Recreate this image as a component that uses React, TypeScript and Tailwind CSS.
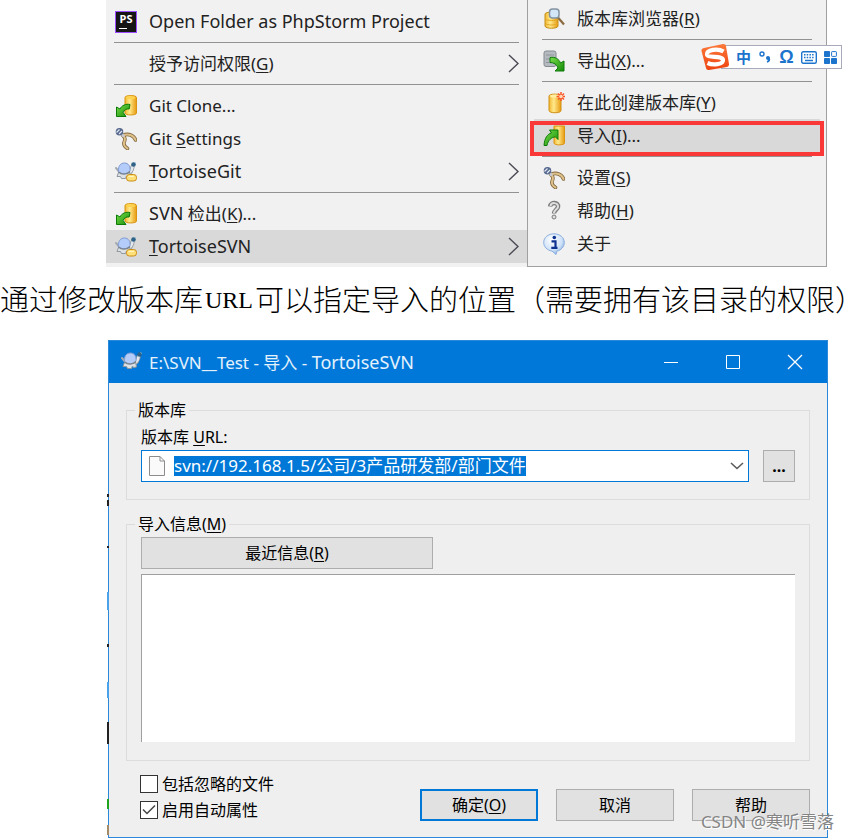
import type { ReactNode } from "react";

const UI_FONT = "font-['Noto_Sans','Noto_Sans_CJK_SC',sans-serif]";

function PhpStormIcon() {
  return (
    <div className="w-[22px] h-[22px] border border-[#9b4dff] bg-[#151515] text-white text-[11px] leading-[14px] font-bold text-center relative">
      PS
      <span className="absolute left-[3px] bottom-[3px] w-2 h-px bg-white" />
    </div>
  );
}

function Gradients() {
  return (
    <svg width="0" height="0" className="absolute" aria-hidden="true">
      <defs>
        <linearGradient id="gold" x1="0" x2="1" y1="0" y2="0">
          <stop offset="0" stopColor="#f2b632" />
          <stop offset="0.4" stopColor="#ffe98a" />
          <stop offset="1" stopColor="#e79a10" />
        </linearGradient>
        <linearGradient id="green" x1="0" x2="1" y1="0" y2="1">
          <stop offset="0" stopColor="#7ae04a" />
          <stop offset="1" stopColor="#128a08" />
        </linearGradient>
        <linearGradient id="orange" x1="0" x2="0" y1="0" y2="1">
          <stop offset="0" stopColor="#fb7a3a" />
          <stop offset="1" stopColor="#ee4310" />
        </linearGradient>
        <radialGradient id="bubble" cx="0.4" cy="0.3" r="0.8">
          <stop offset="0" stopColor="#ffffff" />
          <stop offset="0.6" stopColor="#cfe2f8" />
          <stop offset="1" stopColor="#6e9fdc" />
        </radialGradient>
      </defs>
    </svg>
  );
}

function Svg({ children }: { children: ReactNode }) {
  return (
    <svg width="22" height="22" viewBox="0 0 22 22" fill="none" aria-hidden="true">
      {children}
    </svg>
  );
}

function CheckoutIcon() {
  return (
    <Svg>
      <path d="M10 2.500c0-2.600 11.500-2.600 11.500 0v15.500c0 2.600-11.500 2.600-11.500 0z" fill="url(#gold)" stroke="#d99410" />
      <ellipse cx="15.700" cy="2.700" rx="4.800" ry="1.400" fill="#ffd34d" />
      <path d="M15 9.500C11 8.500 6.500 10.500 5 14L1.500 12v9.500H11L8.200 17.500c.8-2.500 3.300-4 6-3.500z" fill="url(#green)" stroke="#0d7a08" />
    </Svg>
  );
}

function ImportIcon() {
  return (
    <Svg>
      <path d="M11 1h10.500v17c0 2.500-10.500 2.500-10.500 0z" fill="url(#gold)" stroke="#d99410" />
      <path d="M1 20.500C1.500 13 4.500 9 8.500 8L6.500 5H15v9.500l-2.700-2.700C8.500 12.500 5 15 4 20.500z" fill="url(#green)" stroke="#0d7a08" />
    </Svg>
  );
}

function WrenchIcon() {
  return (
    <Svg>
      <path d="M8 7.500c2.500 2 2 5 1 7-.5 2.500 1 4.500 3.500 6" stroke="#80683e" strokeWidth="3.600" strokeLinecap="round" />
      <path d="M8 7.500c5-2.500 11-.5 12.500 4.500" stroke="#80683e" strokeWidth="3.600" strokeLinecap="round" />
      <path d="M8 7.500c2.500 2 2 5 1 7-.5 2.500 1 4.500 3.500 6" stroke="#dfc08a" strokeWidth="2" strokeLinecap="round" />
      <path d="M8 7.500c5-2.500 11-.5 12.500 4.500" stroke="#dfc08a" strokeWidth="2" strokeLinecap="round" />
      <circle cx="4.500" cy="3.800" r="3.800" fill="#56678c" />
      <path d="M1.500 4.500l3-3M4 6l3-3" stroke="#dfe6f2" strokeWidth="1.200" />
      <circle cx="8" cy="7.500" r="1.600" fill="#c2c8d4" />
    </Svg>
  );
}

function TortoiseIcon({ badge = true }: { badge?: boolean }) {
  return (
    <Svg>
      <path d="M13 12.500c3-1 4-4 4.500-6.500" stroke="#8f979f" strokeWidth="4.200" strokeLinecap="round" />
      <path d="M13 12.500c3-1 4-4 4.500-6.500" stroke="#e3e8ec" strokeWidth="2.600" strokeLinecap="round" />
      <path d="M1 7l2.500 3" stroke="#a5abb2" strokeWidth="2" strokeLinecap="round" />
      <path d="M3.500 11.500L2 15.500h3.500l1 2h4l1-2.500 1 1.500 3-.5-1-5z" fill="#dde2e6" stroke="#8f979f" />
      <path d="M3.500 10.500C3 5 5.500 2 9.500 2s6 3.500 5.500 8c-3 3.500-8.500 3.500-11.500.5z" fill="#b3ccfa" stroke="#7f9bd2" />
      <path d="M3.500 11c3 3 8.500 3 11.500-.5" stroke="#7a828c" strokeWidth="1.300" />
      <circle cx="18.500" cy="3.500" r="2.300" fill="#2f6488" />
      <path d="M19.500 1.500l1.500 1" stroke="#7fb0cc" />
      {badge && <rect x="11.500" y="13.500" width="10" height="6.500" rx="2.800" fill="#ffdf78" stroke="#c98d18" />}
      {badge && <path d="M13.500 15.500h5.500" stroke="#fff4c2" />}
    </Svg>
  );
}

function BrowserIcon() {
  return (
    <Svg>
      <path d="M2 6c0-2.500 13-2.500 13 0v12c0 3-13 3-13 0z" fill="url(#gold)" stroke="#c58f16" />
      <path d="M2 11c3 2 10 2 13 0M2 15.500c3 2 10 2 13 0" stroke="#e2a821" />
      <path d="M15 9.500l6 7" stroke="#8b6a3f" strokeWidth="2.200" />
      <rect x="6.500" y="1" width="9.500" height="9" rx="3" fill="#d3e6f8" stroke="#8392a1" strokeWidth="1.500" />
    </Svg>
  );
}

function ExportIcon() {
  return (
    <Svg>
      <rect x="1" y="1" width="12" height="15.500" rx="2" fill="#b4bac0" stroke="#858b90" />
      <path d="M3 5h8M3 9h8M3 12.500h5" stroke="#8f969c" />
      <path d="M7 7.500c5-1 9 1.500 10.500 5.500l3.500-2v10H12l3-3c-1-3.500-4-5.500-8-5.500z" fill="url(#green)" stroke="#0d7a08" />
    </Svg>
  );
}

function CreateRepoIcon() {
  return (
    <Svg>
      <path d="M6 4c0-2.500 12-2.500 12 0v14.500c0 3-12 3-12 0z" fill="url(#gold)" stroke="#d09015" />
      <ellipse cx="12" cy="4" rx="5" ry="1.500" fill="#fff0a4" />
      <path d="M18 0v9M13.500 4.500h9M15 1.500l6 6M21 1.500l-6 6" stroke="#fa5528" strokeWidth="1.500" />
      <circle cx="18" cy="4.500" r="1.800" fill="#ffd9b8" />
    </Svg>
  );
}

function HelpIcon() {
  return (
    <Svg>
      <path d="M7 6.500C7.500 1.500 16 2 15 7c-.5 2.500-4 3-4 6.500" stroke="#7c7c7c" strokeWidth="4.400" />
      <path d="M7.500 6C8 2 15.500 2 15 7c-.5 2.500-4 3-4 6" stroke="#dedede" strokeWidth="2" />
      <circle cx="11" cy="17" r="2" fill="#dedede" stroke="#7c7c7c" />
    </Svg>
  );
}

function AboutIcon() {
  return (
    <Svg>
      <path d="M11 .8c5.800 0 10.300 3.700 10.300 8.700 0 4.300-3.300 7.800-7.300 8.600L13 21.500l-4-3.400C4.200 17.300.7 13.800.7 9.500.7 4.500 5.200.8 11 .8z" fill="url(#bubble)" stroke="#8caede" />
      <circle cx="11.300" cy="4.500" r="1.800" fill="#0e3291" />
      <path d="M8.500 8.300h4v6M8.300 14.800h6.200" stroke="#0e3291" strokeWidth="2.200" />
    </Svg>
  );
}

function Arrow() {
  return (
    <svg width="11" height="19" viewBox="0 0 11 19" fill="none" stroke="#4a4a55" strokeWidth="1.400" aria-hidden="true">
      <path d="M1 1l9 8.500L1 18" />
    </svg>
  );
}

function Key({ children }: { children: string }) {
  return <span className="underline underline-offset-2 decoration-1">{children}</span>;
}

type MenuItemProps = {
  icon?: ReactNode;
  children: ReactNode;
  submenu?: boolean;
  active?: boolean;
};

function MenuItem({ icon, children, submenu, active }: MenuItemProps) {
  return (
    <button
      type="button"
      className={`flex w-full h-[33px] items-center gap-3 pl-[9px] pr-2 text-left whitespace-nowrap ${active ? "bg-[#d9d9d9]" : ""}`}
    >
      <span className="w-[22px] h-[22px] shrink-0">{icon}</span>
      <span className="flex-1">{children}</span>
      {submenu && <Arrow />}
    </button>
  );
}

function Separator() {
  return <div className="h-[9px] mx-2 flex items-center"><div className="h-px w-full bg-[#929292]" /></div>;
}

function ExplorerMenu() {
  return (
    <nav className="flex-1 bg-[#f1f1f1] pt-[5px] pb-1" aria-label="Explorer">
      <MenuItem icon={<PhpStormIcon />}><span className="text-[18px]">Open Folder as PhpStorm Project</span></MenuItem>
      <Separator />
      <MenuItem submenu>授予访问权限(<Key>G</Key>)</MenuItem>
      <Separator />
      <MenuItem icon={<CheckoutIcon />}>Git Clone...</MenuItem>
      <MenuItem icon={<WrenchIcon />}>Git <Key>S</Key>ettings</MenuItem>
      <MenuItem icon={<TortoiseIcon />} submenu><span className="text-[18px]"><Key>T</Key>ortoiseGit</span></MenuItem>
      <Separator />
      <MenuItem icon={<CheckoutIcon />}><span className="text-[18px]">SVN</span> 检出(<Key>K</Key>)...</MenuItem>
      <MenuItem icon={<TortoiseIcon />} submenu active><span className="text-[18px]"><Key>T</Key>ortoiseSVN</span></MenuItem>
    </nav>
  );
}

function SvnMenu() {
  return (
    <nav className="w-[300px] bg-[#f1f1f1] border border-t-0 border-[#a0a0a0] pt-0.5 px-1.5" aria-label="TortoiseSVN">
      <MenuItem icon={<BrowserIcon />}>版本库浏览器(<Key>R</Key>)</MenuItem>
      <Separator />
      <MenuItem icon={<ExportIcon />}>导出(<Key>X</Key>)...</MenuItem>
      <Separator />
      <MenuItem icon={<CreateRepoIcon />}>在此创建版本库(<Key>Y</Key>)</MenuItem>
      <div className="relative">
        <MenuItem icon={<ImportIcon />} active>导入(<Key>I</Key>)...</MenuItem>
        <div className="absolute top-0.5 -bottom-1 -inset-x-1 border-4 border-[#fb3838]" />
      </div>
      <Separator />
      <MenuItem icon={<WrenchIcon />}>设置(<Key>S</Key>)</MenuItem>
      <MenuItem icon={<HelpIcon />}>帮助(<Key>H</Key>)</MenuItem>
      <MenuItem icon={<AboutIcon />}>关于</MenuItem>
    </nav>
  );
}

function ImeBar() {
  return (
    <div className="absolute top-[43px] right-2 flex items-center h-7 text-[#1c74cc]">
      <svg width="28" height="28" viewBox="0 0 28 28" className="relative z-10 -mr-2" aria-hidden="true">
        <path d="M3 5L22 1Q24.500.6 25 3L28 21Q28.200 23.500 26 24L8 27Q5.500 27.500 5 25L.5 8Q0 5.600 3 5z" fill="url(#orange)" />
        <path d="M22.500 8.500C17 5 5.500 6.500 6 11.500c.5 4 15.500.5 16 5.500.3 4.500-10 5.500-15.500 3" fill="none" stroke="#fff" strokeWidth="4.200" />
      </svg>
      <div className="flex h-6 items-center gap-[7px] bg-white border border-[#a9abbb] pl-[14px] pr-1 text-[15px] leading-none font-bold">
        <span>中</span>
        <svg width="14" height="14" viewBox="0 0 14 14" fill="none" aria-hidden="true">
          <circle cx="4" cy="4" r="2" stroke="currentColor" strokeWidth="1.400" />
          <circle cx="10" cy="8" r="2" fill="currentColor" />
          <path d="M11 8q1 3-2 4" stroke="currentColor" strokeWidth="1.800" />
        </svg>
        <span className="w-[15px] text-center text-[18px] font-['Liberation_Sans',sans-serif]">Ω</span>
        <svg width="16" height="13" viewBox="0 0 16 13" aria-hidden="true">
          <rect x=".7" y=".7" width="14.600" height="11.600" rx="1.500" fill="none" stroke="currentColor" strokeWidth="1.400" />
          <path d="M3 3.700h10.500M3 6.500h10.500" stroke="currentColor" strokeWidth="1.500" strokeDasharray="1.500 1.200" />
          <path d="M4 9.500h8" stroke="currentColor" strokeWidth="1.500" />
        </svg>
        <svg width="13" height="13" viewBox="0 0 13 13" fill="currentColor" aria-hidden="true">
          <rect width="6" height="6" rx=".8" />
          <rect x="7.600" y=".6" width="4.800" height="4.800" rx=".6" fill="none" stroke="currentColor" />
          <rect y="7" width="6" height="6" rx=".8" />
          <rect x="7" y="7" width="6" height="6" rx=".8" />
        </svg>
      </div>
    </div>
  );
}

function TitleBar() {
  return (
    <header className="flex items-center h-[42px] bg-[#0078d9] pl-3 pr-6 text-[17px] text-white/90">
      <TortoiseIcon badge={false} />
      <h1 className="flex-1 pl-1.5">E:\SVN__Test - 导入 - <span className="text-[18px]">TortoiseSVN</span></h1>
      <div className="flex gap-[46px]">
        <button type="button" aria-label="最小化">
          <svg width="16" height="16" viewBox="0 0 16 16" stroke="#fff" aria-hidden="true"><path d="M1 8.500h14" /></svg>
        </button>
        <button type="button" aria-label="最大化">
          <svg width="16" height="16" viewBox="0 0 16 16" fill="none" stroke="#fff" aria-hidden="true"><path d="M1.500 1.500h13v13h-13z" /></svg>
        </button>
        <button type="button" aria-label="关闭">
          <svg width="16" height="16" viewBox="0 0 16 16" stroke="#fff" strokeWidth="1.300" aria-hidden="true"><path d="M1 1l14 14M15 1L1 15" /></svg>
        </button>
      </div>
    </header>
  );
}

function DialogButton({ children, primary }: { children: ReactNode; primary?: boolean }) {
  return (
    <button
      type="button"
      className={`w-[118px] h-8 bg-[#e1e1e1] ${primary ? "border-2 border-[#0078d7]" : "border border-[#adadad]"}`}
    >
      {children}
    </button>
  );
}

function ImportDialog() {
  return (
    <section className="ml-0.5 border border-[#2b87d8] bg-[#efefef] text-[16px] text-black">
      <TitleBar />
      <div className="px-[17px] pt-[17px] pb-[14px]">
        <fieldset className="border border-[#dcdcdc] px-[14px] pb-[17px]">
          <legend className="-ml-1.5 px-[3px] h-5 leading-5">版本库</legend>
          <label htmlFor="url" className="block pt-1 leading-[26px]">版本库 <Key>U</Key>RL:</label>
          <div className="flex items-center gap-[14px]">
            <div className="flex flex-1 h-8 items-center bg-white border border-[#0078d7] pl-1.5 pr-1">
              <svg width="18" height="22" viewBox="0 0 18 22" fill="#fafafa" stroke="#8c8c8c" aria-hidden="true">
                <path d="M1.500 1.500H12l4.500 4.500v14.500h-15zM12 1.500V6h4.500" />
              </svg>
              <input
                id="url"
                className="field-sizing-content ml-2 h-5 text-[17px] leading-5 bg-[#0078d7] text-white outline-none"
                defaultValue="svn://192.168.1.5/公司/3产品研发部/部门文件"
              />
              <button type="button" className="ml-auto" aria-label="展开">
                <svg width="14" height="8" viewBox="0 0 14 8" fill="none" stroke="#5c5c5c" strokeWidth="1.600" aria-hidden="true"><path d="M1 1l6 5.500L13 1" /></svg>
              </button>
            </div>
            <button type="button" className="w-8 h-8 border border-[#adadad] bg-[#e1e1e1] font-bold">...</button>
          </div>
        </fieldset>

        <fieldset className="mt-[14px] border border-[#dcdcdc] px-[14px] pb-[18px]">
          <legend className="-ml-1.5 px-[3px] h-5 leading-5"><label htmlFor="message">导入信息(<Key>M</Key>)</label></legend>
          <button type="button" className="block mt-[3px] w-[292px] h-8 border border-[#adadad] bg-[#e1e1e1]">
            最近信息(<Key>R</Key>)
          </button>
          <textarea id="message" className="block mt-[5px] w-full h-[168px] resize-none bg-white border-t border-l border-[#a0a0a0] outline-none" />
        </fieldset>

        <div className="flex items-start justify-between pl-[14px] pt-[10px]">
          <div>
            <label className="flex h-[26px] items-center gap-1">
              <input type="checkbox" className="appearance-none w-[18px] h-[18px] border border-[#333] bg-white" />
              包括忽略的文件
            </label>
            <label className="relative flex h-[26px] items-center gap-1">
              <input type="checkbox" defaultChecked className="appearance-none w-[18px] h-[18px] border border-[#333] bg-white" />
              <svg width="14" height="12" viewBox="0 0 14 12" fill="none" stroke="#444" strokeWidth="1.500" className="absolute left-0.5" aria-hidden="true"><path d="M1 5.500l4 4L13 1.500" /></svg>
              启用自动属性
            </label>
          </div>
          <div className="flex gap-[18px] pt-[18px]">
            <DialogButton primary>确定(<Key>O</Key>)</DialogButton>
            <DialogButton>取消</DialogButton>
            <DialogButton>帮助</DialogButton>
          </div>
        </div>
      </div>
    </section>
  );
}

// slivers of the desktop showing past the dialog's left edge
function DesktopEdge() {
  return (
    <svg width="2" height="498" viewBox="0 0 2 498" className="absolute left-0 top-0" aria-hidden="true">
      <path d="M1 154v3M1 160v6M1 206v2M1 304v3M1 382v22" stroke="#222" strokeWidth="2" />
      <path d="M1 252v18M1 342v16" stroke="#4aa3ea" strokeWidth="2" />
      <path d="M1 459v10" stroke="#1fa51f" strokeWidth="2" />
      <path d="M1 485v10" stroke="#a58a68" strokeWidth="2" />
    </svg>
  );
}

export default function App() {
  return (
    <main className={`relative overflow-hidden bg-white ${UI_FONT}`}>
      <Gradients />
      <div className="flex pl-[106px] pr-[23px] text-[17px] text-[#222]">
        <ExplorerMenu />
        <SvnMenu />
      </div>
      <ImeBar />
      <p className="flex h-[73px] items-center pb-2 text-[29px] font-light whitespace-nowrap text-black">
        <span>通过修改版本库</span>
        <span className="px-0.5 text-[24px] font-['Liberation_Serif',serif] font-normal">URL</span>
        <span>可以指定导入的位置（需要拥有该目录的权限</span>
        <span className="[font-feature-settings:'halt']">）</span>
      </p>
      <div className="relative pl-[106px] pr-[22px]">
        <div className="absolute left-[107px] top-0"><DesktopEdge /></div>
        <ImportDialog />
      </div>
      <div className="absolute right-4 bottom-1 text-[17px] text-[#858585] [text-shadow:1px_1px_0_#fff]">CSDN @寒听雪落</div>
    </main>
  );
}
